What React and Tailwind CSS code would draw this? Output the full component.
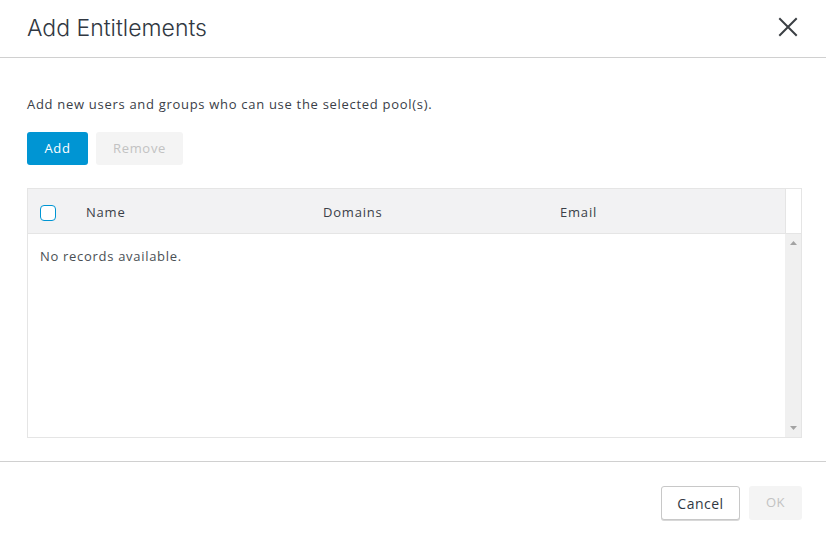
export default function App() {
  const body = { fontFamily: '"Open Sans", "Noto Sans", sans-serif' };
  return (
    <div className="w-[826px] h-[540px] bg-white flex flex-col text-[#313842]" style={body}>
      <div className="h-[58px] shrink-0 flex items-center justify-between pl-[27px] pr-[28px] border-b border-[#d0d0d0]">
        <h1 className="text-[23px] font-light text-[#313842] tracking-[0px] mt-[-1px]" style={{ fontFamily: 'Inter, Roboto, "Liberation Sans", sans-serif' }}>
          Add Entitlements
        </h1>
        <svg width="20" height="20" viewBox="0 0 20 20" className="mt-[-3px]">
          <path d="M2 2 L18 18 M18 2 L2 18" stroke="#3b3f44" strokeWidth="2" strokeLinecap="square" />
        </svg>
      </div>
      <div className="flex-1 flex flex-col px-[27px] pt-[37px] pr-[24px]">
        <p className="text-[13px] leading-[18px] text-[#3a4048] tracking-[0.7px]">Add new users and groups who can use the selected pool(s).</p>
        <div className="flex gap-[8px] mt-[19px]">
          <button className="w-[61px] h-[33px] rounded-[3px] bg-[#0095d3] text-white text-[13px] tracking-[0.7px]">Add</button>
          <button className="w-[87px] h-[33px] rounded-[3px] bg-[#f4f4f4] text-[#c2c2c2] text-[13px] tracking-[0.7px]">Remove</button>
        </div>
        <div className="mt-[23px] h-[250px] border border-[#e5e5e5] flex flex-col">
          <div className="h-[45px] shrink-0 flex border-b border-[#e5e5e5]">
            <div className="flex-1 bg-[#f2f2f3] flex items-center pt-[3px] text-[13px] text-[#3a4048] tracking-[0.8px]">
              <div className="w-[58px] pl-[12px] flex items-center">
                <span className="w-[16px] h-[16px] rounded-[4px] border border-[#0095d3] bg-white block" />
              </div>
              <div className="w-[237px]">Name</div>
              <div className="w-[237px]">Domains</div>
              <div>Email</div>
            </div>
            <div className="w-[16px] border-l border-[#e5e5e5] bg-white" />
          </div>
          <div className="flex-1 flex">
            <div className="flex-1 pl-[12px] pt-[13px] text-[13px] text-[#4a4f55] tracking-[0.7px]">No records available.</div>
            <div className="w-[16px] bg-[#f0f0f0] flex flex-col items-center justify-between py-[7px]">
              <svg width="7" height="4" viewBox="0 0 7 4"><path d="M3.5 0 L7 4 L0 4 Z" fill="#a3a3a3" /></svg>
              <svg width="7" height="4" viewBox="0 0 7 4"><path d="M0 0 L7 0 L3.5 4 Z" fill="#a3a3a3" /></svg>
            </div>
          </div>
        </div>
      </div>
      <div className="h-[79px] shrink-0 border-t border-[#d0d0d0] flex items-start justify-end gap-[9px] pr-[24px] pt-[24px]">
        <button className="w-[79px] h-[34px] rounded-[3px] border border-[#c8c8c8] bg-white text-[#313842] text-[14px] tracking-[0.5px] shadow-[0_1px_0_#d8d8d8]">Cancel</button>
        <button className="w-[53px] h-[34px] rounded-[3px] bg-[#f4f4f4] text-[#c2c2c2] text-[13px] tracking-[0.5px]">OK</button>
      </div>
    </div>
  );
}
